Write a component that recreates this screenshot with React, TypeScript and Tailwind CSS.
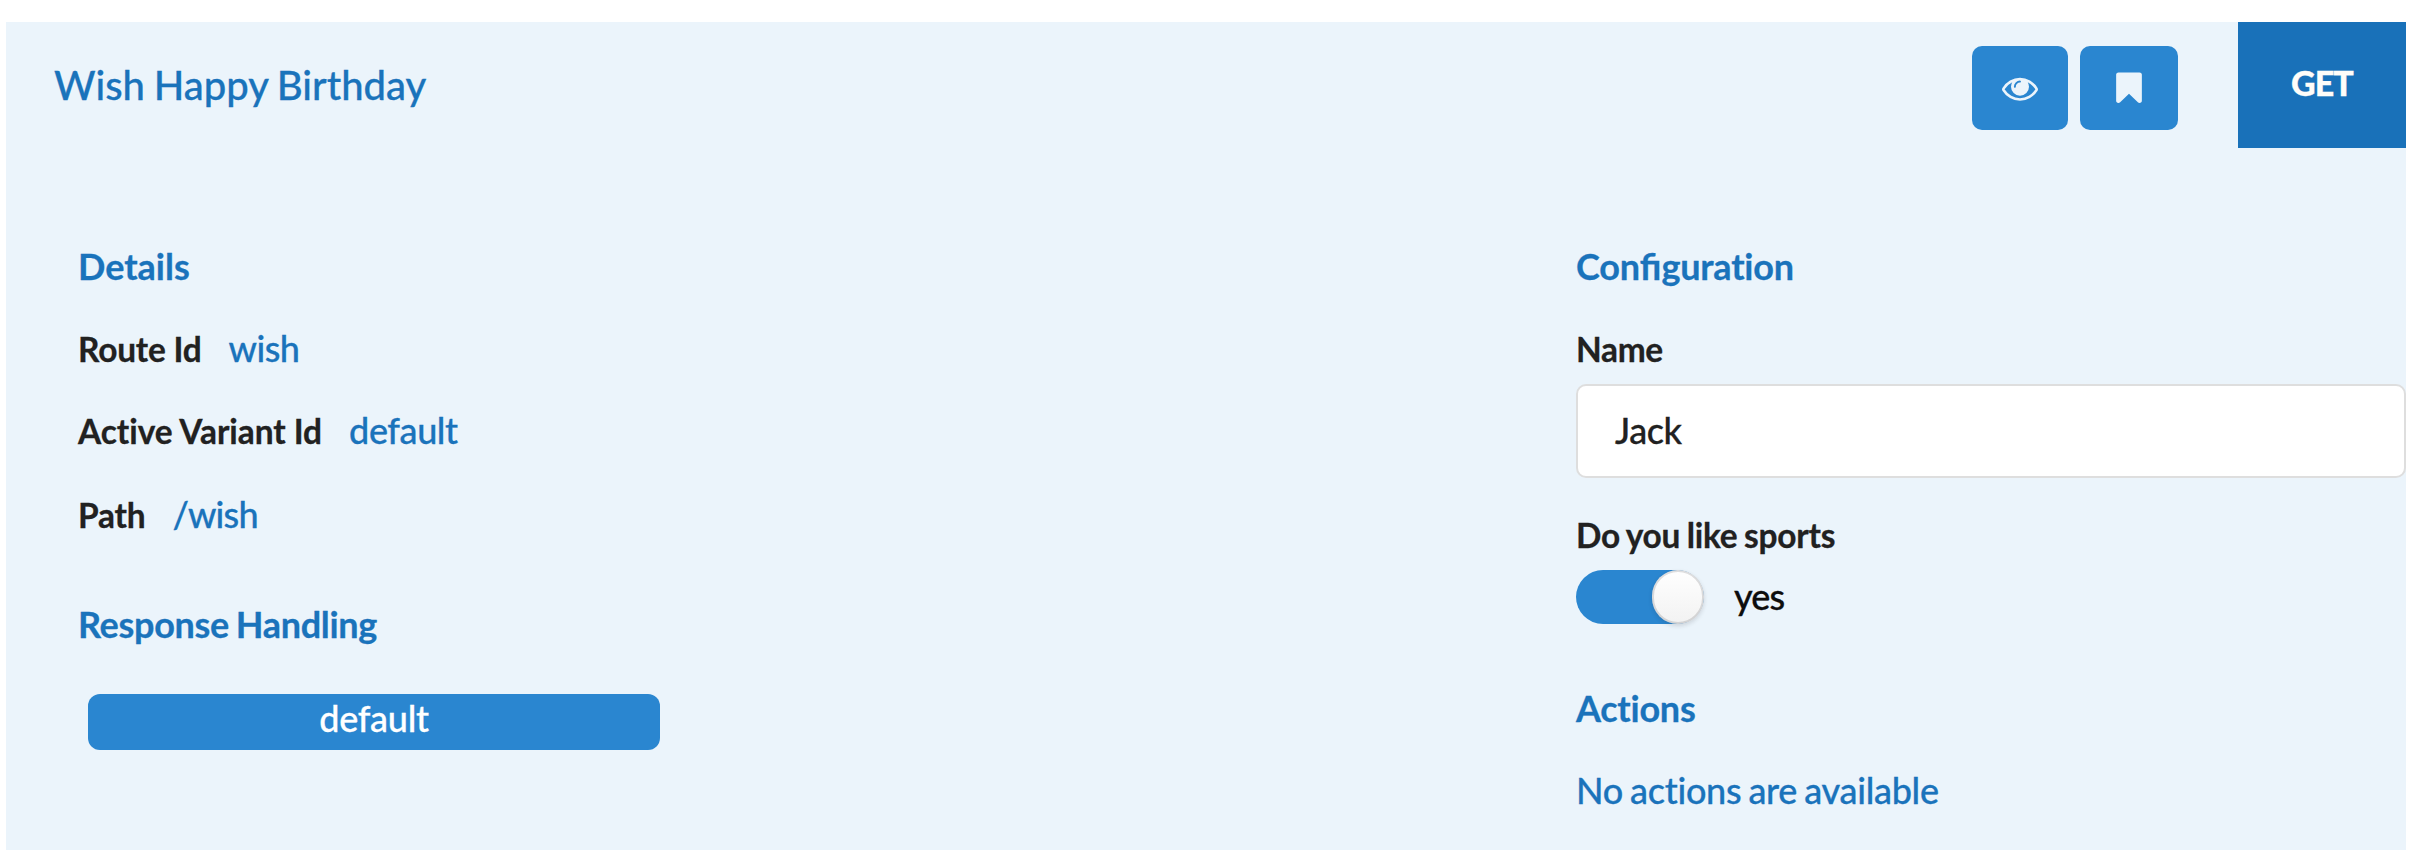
import React from "react";

const EYE =
  "M1664 960q-152-236-381-353 61 104 61 225 0 185-131.5 316.5t-316.5 131.5-316.5-131.5-131.5-316.5q0-121 61-225-229 117-381 353 133 205 333.5 326.5t434.5 121.5 434.5-121.5 333.5-326.5zm-720-384q0-20-14-34t-34-14q-125 0-214.5 89.5t-89.5 214.5q0 20 14 34t34 14 34-14 14-34q0-86 61-147t147-61q20 0 34-14t14-34zm848 384q0 34-20 69-140 230-376.5 368.5t-499.5 138.5-499.5-139-376.5-368q-20-35-20-69t20-69q140-229 376.5-368t499.5-139 499.5 139 376.5 368q20 35 20 69z";
const BOOKMARK =
  "M1420 128q23 0 44 9 33 13 52.5 41t19.5 62v1289q0 34-19.5 62t-52.5 41q-19 8-44 8-48 0-83-32l-441-424-441 424q-36 33-83 33-23 0-44-9-33-13-52.5-41t-19.5-62v-1289q0-34 19.5-62t52.5-41q21-9 44-9h1048z";

function Icon({ path }: { path: string }) {
  return (
    <svg viewBox="0 0 1792 1792" className="mb-px size-9 fill-[#ebf4fb]" aria-hidden="true">
      <path d={path} />
    </svg>
  );
}

function Heading({ className, children }: { className: string; children: React.ReactNode }) {
  return <h3 className={`text-[36px] leading-10 font-bold text-[#1a73bb] ${className}`}>{children}</h3>;
}

function Detail({ label, value, labelClass, valueClass }: { label: string; value: string; labelClass: string; valueClass: string }) {
  return (
    <div className="flex h-10 items-baseline gap-[27px] leading-10">
      <span className={`text-[33.43px] leading-10 font-bold text-[#212121] ${labelClass}`}>{label}</span>
      <span className={`text-[36px] leading-10 font-medium text-[#1a73bb] ${valueClass}`}>{value}</span>
    </div>
  );
}

export default function App() {
  return (
    <div className="h-[854px] w-[2430px] bg-white pt-[22px] pl-1.5 font-['Lato',sans-serif] [font-variant-ligatures:none] [-webkit-text-stroke:0.3px]">
      <section className="h-[828px] w-[2400px] bg-[#ebf4fb]">
        <header className="flex h-[126px] items-start pl-12">
          <h2 className="mt-[38px] flex-1 text-[40px] leading-[50px] font-medium text-[#1a73bb] [word-spacing:-1.3px]">
            Wish Happy Birthday
          </h2>
          <div className="mt-6 mr-[60px] flex gap-3">
            <button className="flex h-[84px] w-24 items-center justify-center rounded-[10px] bg-[#2a86d0]">
              <Icon path={EYE} />
            </button>
            <button className="flex h-[84px] w-[98px] items-center justify-center rounded-[10px] bg-[#2a86d0]">
              <Icon path={BOOKMARK} />
            </button>
          </div>
          <div className="flex h-[126px] w-[168px] items-center justify-center bg-[#1971b9] pb-1 text-[34px] leading-10 font-black tracking-[-0.9px] text-[#fffdf9]">
            GET
          </div>
        </header>

        <div className="grid grid-cols-[1498px_830px] pt-[98px] pl-[72px]">
          <div>
            <Heading className="tracking-normal">Details</Heading>
            <div className="mt-[42px] flex flex-col gap-[42px]">
              <Detail label="Route Id" value="wish" labelClass="tracking-[-0.2px]" valueClass="tracking-[-0.5px]" />
              <Detail label="Active Variant Id" value="default" labelClass="tracking-[-0.04px]" valueClass="tracking-[-0.4px]" />
            </div>
            <div className="mt-11">
              <Detail label="Path" value="/wish" labelClass="tracking-[-0.2px]" valueClass="tracking-[-0.8px]" />
            </div>
            <div className="mt-[70px]">
              <Heading className="tracking-[-0.32px] [word-spacing:-1.5px]">Response Handling</Heading>
            </div>
            <div className="mt-[50px] ml-2.5 h-14 w-[572px] rounded-[12px] bg-[#2a86d0] pt-1 text-center text-[36px] leading-10 font-medium tracking-[-0.3px] text-white">
              default
            </div>
          </div>

          <div>
            <Heading className="tracking-[-0.2px]">
              Con<span className="tracking-normal [font-variant-ligatures:normal]">fi</span>guration
            </Heading>
            <label className="mt-[43px] block text-[33.43px] leading-10 font-bold tracking-[-0.3px] text-[#212121]">Name</label>
            <div className="mt-[15px] flex h-[94px] items-center rounded-[10px] border-2 border-[#dedede] bg-white pb-0.5 pl-[37px] text-[36px] leading-10 font-medium tracking-[-0.4px] text-[#212121]">
              Jack
            </div>
            <div className="mt-[37px] text-[33.43px] leading-10 font-bold tracking-[-0.25px] text-[#212121] [word-spacing:-1.2px]">
              Do you like sports
            </div>
            <div className="mt-[15px] flex h-[54px] items-center gap-[30px]">
              <div className="flex h-[54px] w-32 justify-end rounded-full bg-[#2a86d0]">
                <div className="h-[54px] w-[52px] rounded-full bg-linear-to-b from-white to-[#f2f2f2] shadow-[0_2px_4px_0_rgba(34,36,38,0.15),inset_0_0_0_2px_rgba(34,36,38,0.15)]" />
              </div>
              <span className="mb-[3px] text-[36px] leading-10 font-medium tracking-[-0.9px] text-[#0d0d0d]">yes</span>
            </div>
            <div className="mt-16">
              <Heading className="tracking-[-0.25px]">Actions</Heading>
            </div>
            <p className="mt-[42px] text-[36px] leading-10 font-medium tracking-[-0.3px] text-[#1a73bb] [word-spacing:-1.6px]">
              No actions are available
            </p>
          </div>
        </div>
      </section>
    </div>
  );
}
